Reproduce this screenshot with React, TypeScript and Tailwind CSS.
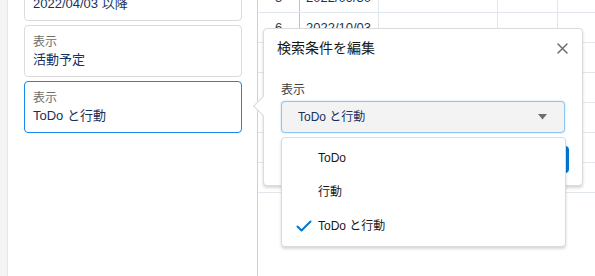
import React from "react";

const FONT = { fontFamily: '"Liberation Sans", "Noto Sans CJK JP", sans-serif' };

function Card({ label, value, active }: { label: string; value: string; active?: boolean }) {
  return (
    <div
      className={`h-[52px] w-[218px] rounded-[4px] border bg-white px-[8px] pt-[8px] ${
        active ? "border-[#1589ee]" : "border-[#dddbda]"
      }`}
    >
      <div className="text-[12px] leading-[16px] text-[#706e6b]">{label}</div>
      <div className="text-[13px] leading-[19px] text-[#16325c]">{value}</div>
    </div>
  );
}

const rows = ["5", "6", "7", "8", "9", "10", "11"];
const dates = ["2022/09/30", "2022/10/03", "2022/10/04", "2022/10/05", "2022/10/06", "2022/10/07", "2022/10/08"];

export default function App() {
  return (
    <div className="relative flex h-[276px] w-[595px] overflow-hidden bg-white" style={FONT}>
      {/* left gray strip */}
      <div className="h-full w-[8px] shrink-0 border-r border-[#e6e6e6] bg-[#f4f4f4]" />
      {/* filter panel */}
      <div className="h-full w-[250px] shrink-0 border-r border-[#c9d1dd] pl-[16px]">
        <div className="mt-[-31px] flex flex-col gap-[4px]">
          <Card label="日付" value="2022/04/03 以降" />
          <Card label="表示" value="活動予定" />
          <Card label="表示" value="ToDo と行動" active />
        </div>
      </div>
      {/* table */}
      <div className="flex-1">
        <div className="mt-[-17px]">
          {rows.map((r, i) => (
            <div key={r} className="flex h-[30px] border-b border-[#e1e5ec] text-[13px]">
              <div className="flex w-[42px] items-center justify-center border-r border-[#b8c4d6] text-[#3e3e3c]">
                {r}
              </div>
              <div className="flex w-[79px] items-center border-r border-[#e1e5ec] pl-[6px] text-[#16325c]">
                {dates[i]}
              </div>
              <div className="flex w-[119px] items-center border-r border-[#e1e5ec] pl-[6px] text-[#b0adab]">-</div>
              <div className="flex w-[60px] items-center border-r border-[#e1e5ec] pl-[6px] text-[#b0adab]">-</div>
              <div className="flex flex-1 items-center pl-[6px] text-[#b0adab]">-</div>
            </div>
          ))}
        </div>
      </div>

      {/* popover */}
      <div className="absolute left-[263px] top-[28px] h-[158px] w-[320px] rounded-[4px] border border-[#dddbda] bg-white shadow-[0_2px_3px_rgba(0,0,0,0.16)]">
        <div className="absolute left-[-8px] top-[70px] h-[14px] w-[14px] rotate-45 border-b border-l border-[#dddbda] bg-white" />
        <div className="relative flex h-[39px] items-center justify-between pl-[13px] pr-[14px]">
          <span className="text-[14px] text-[#181818]">検索条件を編集</span>
          <svg width="11" height="11" viewBox="0 0 11 11" className="mt-[-1px]">
            <path d="M1 1 L10 10 M10 1 L1 10" stroke="#706e6b" strokeWidth="1.5" strokeLinecap="round" />
          </svg>
        </div>
        <div className="relative px-[17px] pt-[14px]">
          <div className="text-[12px] leading-[16px] text-[#3e3e3c]">表示</div>
          <div className="mt-[3px] flex h-[32px] items-center justify-between rounded-[4px] border border-[#8ec5f2] bg-[#f3f3f3] pl-[16px] pr-[17px] shadow-[0_0_2px_#a8d2f5]">
            <span className="text-[12px] text-[#16325c]">ToDo と行動</span>
            <svg width="9" height="6" viewBox="0 0 9 6">
              <path d="M0 0 L9 0 L4.5 5.5 Z" fill="#706e6b" />
            </svg>
          </div>
          <div className="mt-[13px] flex justify-end pr-[-4px]">
            <div className="mr-[-4px] h-[27px] w-[60px] rounded-[4px] bg-[#0176d3]" />
          </div>
        </div>
      </div>

      {/* dropdown */}
      <div className="absolute left-[281px] top-[137px] w-[285px] rounded-[4px] border border-[#dddbda] bg-white py-[3px] shadow-[0_2px_3px_rgba(0,0,0,0.16)]">
        {["ToDo", "行動", "ToDo と行動"].map((t, i) => (
          <div key={t} className="flex h-[34px] items-center text-[12px] text-[#181818]">
            <div className="flex w-[36px] justify-end pr-[6px]">
              {i === 2 && (
                <svg width="16" height="12" viewBox="0 0 16 12">
                  <path d="M1.5 6.5 L5.5 10.5 L14.5 1.5" stroke="#0176d3" strokeWidth="2" fill="none" strokeLinecap="round" strokeLinejoin="round" />
                </svg>
              )}
            </div>
            <span>{t}</span>
          </div>
        ))}
      </div>
    </div>
  );
}
